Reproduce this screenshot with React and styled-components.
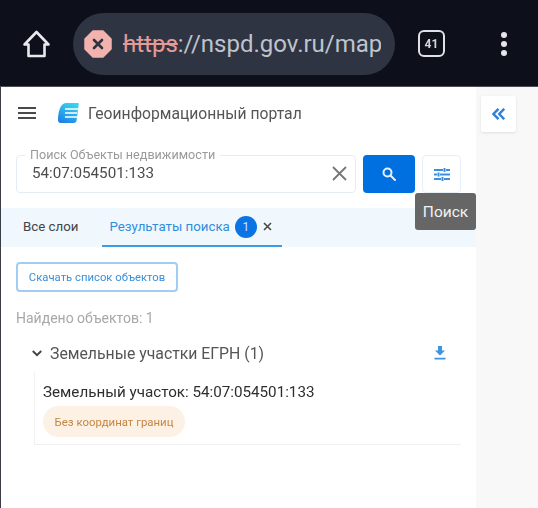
import React from 'react';
import styled, { createGlobalStyle } from 'styled-components';

const Global = createGlobalStyle`
  html, body { margin: 0; padding: 0; background: #fff; }
  body { font-family: Roboto, "Liberation Sans", sans-serif; }
  * { box-sizing: border-box; }
`;

const Page = styled.div`
  width: 538px;
  height: 508px;
  display: flex;
  flex-direction: column;
  overflow: hidden;
  filter: blur(0.55px);
`;

const TopBar = styled.header`
  height: 87px;
  background: #0d101a;
  border-bottom: 1px solid #4a4d55;
  display: flex;
  align-items: center;
  padding: 1px 0 0 22px;
`;

const Omnibox = styled.div`
  width: 322px;
  height: 62px;
  margin-left: 22px;
  border-radius: 31px;
  background: #2f3442;
  display: flex;
  align-items: center;
  padding-left: 11px;
  overflow: hidden;
`;

const UrlText = styled.div`
  margin-left: 11px;
  width: 258px;
  overflow: hidden;
  white-space: nowrap;
  font-size: 24px;
  color: #bfc3cb;
`;

const Scheme = styled.span`
  color: #e59a98;
  text-decoration: line-through;
`;

const TabCount = styled.div`
  width: 27px;
  height: 27px;
  margin-left: 23px;
  border: 2.5px solid #dfe1e5;
  border-radius: 6px;
  color: #d4d6da;
  font-size: 12px;
  font-weight: 700;
  display: flex;
  align-items: center;
  justify-content: center;
`;

const Dots = styled.div`
  margin-left: 56px;
  display: flex;
  flex-direction: column;
  gap: 3px;
`;

const Dot = styled.span`
  width: 6px;
  height: 6px;
  border-radius: 50%;
  background: #e4e6e9;
`;

const Body = styled.div`
  flex: 1;
  display: flex;
  min-height: 0;
`;

const Panel = styled.main`
  width: 476px;
  background: #fff;
  border-left: 1px solid #3a3d45;
  display: flex;
  flex-direction: column;
  position: relative;
`;

const Side = styled.aside`
  flex: 1;
  background: #f8f8f8;
  padding: 9px 0 0 5px;
`;

const CollapseButton = styled.div`
  width: 35px;
  height: 36px;
  background: #fff;
  border-radius: 2px;
  box-shadow: 0 1px 3px rgba(0, 0, 0, 0.1);
  display: flex;
  align-items: center;
  justify-content: center;
`;

const Header = styled.div`
  height: 52px;
  display: flex;
  align-items: center;
  padding: 0 0 0 17px;
`;

const Burger = styled.div`
  width: 18px;
  display: flex;
  flex-direction: column;
  gap: 3px;
`;

const BurgerLine = styled.span`
  height: 2px;
  background: #4a4a4a;
`;

const Title = styled.div`
  margin-left: 9px;
  font-size: 15.7px;
  color: #555;
  white-space: nowrap;
`;

const SearchRow = styled.div`
  display: flex;
  align-items: stretch;
  margin-top: 16px;
  padding-left: 15px;
  height: 38px;
`;

const SearchField = styled.div`
  position: relative;
  width: 340px;
  border: 1px solid #e4edf6;
  border-radius: 4px;
  display: flex;
  align-items: center;
  justify-content: space-between;
  padding: 0 8px 2px 15px;
`;

const FieldLabel = styled.span`
  position: absolute;
  left: 8px;
  top: -8px;
  padding: 0 5px;
  background: #fff;
  font-size: 12.6px;
  line-height: 14px;
  color: #9a9a9a;
  white-space: nowrap;
`;

const FieldValue = styled.span`
  font-size: 15.2px;
  color: #4c4c4c;
`;

const SearchButton = styled.div`
  width: 52px;
  margin-left: 7px;
  background: #0070e0;
  border-radius: 4px;
  display: flex;
  align-items: center;
  justify-content: center;
`;

const FilterButton = styled.div`
  width: 39px;
  margin-left: 7px;
  border: 1px solid #e6eff8;
  border-radius: 4px;
  display: flex;
  align-items: center;
  justify-content: center;
`;

const Tooltip = styled.div`
  position: absolute;
  left: 414px;
  top: 106px;
  width: 61px;
  height: 37px;
  background: #666;
  border-radius: 3px;
  color: #f2f2f2;
  font-size: 15.5px;
  display: flex;
  align-items: center;
  justify-content: center;
  z-index: 2;
`;

const Tabs = styled.div`
  height: 39px;
  margin-top: 15px;
  background: #f0f7fd;
  display: flex;
  align-items: stretch;
  padding-left: 22px;
`;

const Tab = styled.div`
  display: flex;
  align-items: center;
  font-size: 13.3px;
  white-space: nowrap;
  color: ${(p) => (p.$active ? '#2f8fdc' : '#444')};
  border-bottom: 2px solid ${(p) => (p.$active ? '#3f9be0' : 'transparent')};
  margin-left: ${(p) => (p.$active ? '23px' : '0')};
  padding: ${(p) => (p.$active ? '0 10px 0 8px' : '0')};
`;

const Badge = styled.span`
  width: 22px;
  height: 22px;
  margin-left: 5px;
  border-radius: 50%;
  background: #0a74e4;
  color: #cfe4fb;
  font-size: 12px;
  display: flex;
  align-items: center;
  justify-content: center;
`;

const TabClose = styled.span`
  margin-left: 6px;
  display: flex;
`;

const Content = styled.div`
  padding: 15px 15px 0 15px;
  display: flex;
  flex-direction: column;
`;

const DownloadList = styled.div`
  align-self: flex-start;
  width: 162px;
  height: 30px;
  border: 2px solid #a3cdf0;
  border-radius: 4px;
  color: #3a8fd8;
  font-size: 11.3px;
  display: flex;
  align-items: center;
  justify-content: center;
`;

const Found = styled.div`
  margin-top: 19px;
  font-size: 14px;
  line-height: 15px;
  color: #a8a8a8;
`;

const GroupRow = styled.div`
  margin-top: 15px;
  height: 24px;
  display: flex;
  align-items: center;
  padding-left: 16px;
`;

const GroupTitle = styled.span`
  margin-left: 8px;
  font-size: 15.8px;
  color: #555;
`;

const GroupDownload = styled.span`
  margin-left: auto;
  margin-right: 15px;
  display: flex;
`;

const ResultItem = styled.div`
  margin: 7px 0 0 18px;
  padding: 11px 0 7px 8px;
  border-left: 1px solid #f2f2f2;
  border-bottom: 1px solid #f0f0f0;
`;

const ItemTitle = styled.div`
  font-size: 15.2px;
  line-height: 18px;
  color: #2e2e2e;
`;

const Chip = styled.div`
  margin-top: 5px;
  width: 142px;
  height: 31px;
  border-radius: 15.5px;
  background: #fdf1e6;
  color: #c48640;
  font-size: 11.4px;
  display: flex;
  align-items: center;
  justify-content: center;
`;

function HomeIcon() {
  return (
    <svg width="29" height="30" viewBox="0 0 29 30" fill="none" stroke="#e8eaed" strokeWidth="2.6" strokeLinejoin="round">
      <path d="M14.5 3 2.5 15.5h4V27h16V15.5h4z" />
    </svg>
  );
}

function BlockedIcon() {
  return (
    <svg width="28" height="28" viewBox="0 0 28 28">
      <path d="M9 1h10l8 8v10l-8 8H9l-8-8V9z" fill="#f2b3ae" stroke="#f2b3ae" strokeWidth="1.5" strokeLinejoin="round" />
      <path d="M10 10l8 8M18 10l-8 8" stroke="#2f3442" strokeWidth="2.6" strokeLinecap="round" />
    </svg>
  );
}

function Logo() {
  return (
    <svg width="21" height="20" viewBox="0 0 21 20" style={{ marginLeft: 22 }}>
      <defs>
        <linearGradient id="logoFill" x1="0.7" y1="0" x2="0.2" y2="1">
          <stop offset="0" stopColor="#37d5ee" />
          <stop offset="1" stopColor="#1f7fe6" />
        </linearGradient>
      </defs>
      <path d="M8 0h12c1 0 1 1 .6 2l-2 15.500c-.3 1.500-1 2.500-3 2.500H3c-2 0-3-1-3-3C0 10 2 0 8 0z" fill="url(#logoFill)" />
      <path d="M7 6h14M7 10h12M7 14h12" stroke="#fff" strokeWidth="1.400" />
    </svg>
  );
}

function DoubleChevron() {
  return (
    <svg width="13" height="12" viewBox="0 0 13 12" fill="none" stroke="#2f80dc" strokeWidth="2.4">
      <path d="M6.500 .8 1.500 6l5 5.200M12.200 .8 7.200 6l5 5.200" />
    </svg>
  );
}

function ClearIcon() {
  return (
    <svg width="15" height="15" viewBox="0 0 15 15" stroke="#777" strokeWidth="1.800">
      <path d="M1 1l13 13M14 1 1 14" />
    </svg>
  );
}

function SearchIcon() {
  return (
    <svg width="14" height="14" viewBox="0 0 14 14" fill="none" stroke="#e6f1fc" strokeWidth="2">
      <circle cx="5.500" cy="5.500" r="4" />
      <path d="M8.500 8.500l4.500 4.500" strokeLinecap="round" />
    </svg>
  );
}

function FilterIcon() {
  return (
    <svg width="16" height="13" viewBox="0 0 16 13" fill="none" stroke="#3a8fe0" strokeWidth="2">
      <path d="M0 2h9M12 2h4M10.500 0v4M0 6.500h3M6 6.500h10M4.500 4.500v4M0 11h7M10 11h6M8.500 9v4" />
    </svg>
  );
}

function SmallClose() {
  return (
    <svg width="9" height="9" viewBox="0 0 9 9" stroke="#444" strokeWidth="1.500">
      <path d="M1 1l7 7M8 1l-7 7" />
    </svg>
  );
}

function Chevron() {
  return (
    <svg width="10" height="7" viewBox="0 0 10 7" fill="none" stroke="#444" strokeWidth="2">
      <path d="M.8 1 5 5.200 9.200 1" />
    </svg>
  );
}

function DownloadIcon() {
  return (
    <svg width="12" height="14" viewBox="0 0 12 14" fill="#3a95e4">
      <path d="M4 0h4v4.500h3L6 9.500 1 4.500h3zM.500 11.800h11v1.700H.500z" />
    </svg>
  );
}

export default function App() {
  return (
    <>
      <Global />
      <Page>
        <TopBar>
          <HomeIcon />
          <Omnibox>
            <BlockedIcon />
            <UrlText><Scheme>https</Scheme>://nspd.gov.ru/map</UrlText>
          </Omnibox>
          <TabCount>41</TabCount>
          <Dots><Dot /><Dot /><Dot /></Dots>
        </TopBar>
        <Body>
          <Panel>
            <Header>
              <Burger><BurgerLine /><BurgerLine /><BurgerLine /></Burger>
              <Logo />
              <Title>Геоинформационный портал</Title>
            </Header>
            <SearchRow>
              <SearchField>
                <FieldLabel>Поиск Объекты недвижимости</FieldLabel>
                <FieldValue>54:07:054501:133</FieldValue>
                <ClearIcon />
              </SearchField>
              <SearchButton><SearchIcon /></SearchButton>
              <FilterButton><FilterIcon /></FilterButton>
            </SearchRow>
            <Tooltip>Поиск</Tooltip>
            <Tabs>
              <Tab>Все слои</Tab>
              <Tab $active>
                Результаты поиска
                <Badge>1</Badge>
                <TabClose><SmallClose /></TabClose>
              </Tab>
            </Tabs>
            <Content>
              <DownloadList>Скачать список объектов</DownloadList>
              <Found>Найдено объектов: 1</Found>
              <GroupRow>
                <Chevron />
                <GroupTitle>Земельные участки ЕГРН (1)</GroupTitle>
                <GroupDownload><DownloadIcon /></GroupDownload>
              </GroupRow>
              <ResultItem>
                <ItemTitle>Земельный участок: 54:07:054501:133</ItemTitle>
                <Chip>Без координат границ</Chip>
              </ResultItem>
            </Content>
          </Panel>
          <Side>
            <CollapseButton><DoubleChevron /></CollapseButton>
          </Side>
        </Body>
      </Page>
    </>
  );
}
